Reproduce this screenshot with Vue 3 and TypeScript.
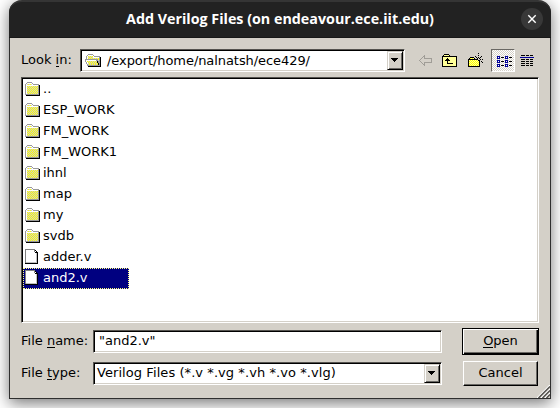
<script setup lang="ts">
import { h, ref, type FunctionalComponent } from 'vue'

type Bitmap = { rows: string[]; palette: Record<string, string> }

const folderPalette = { b: '#ffff00', c: '#cccccc', a: '#ffffff', '*': '#999999', d: '#000000' }

const bitmaps: Record<string, Bitmap> = {
  folder: {
    palette: folderPalette,
    rows: [
      '..*****........',
      '.*aaaaa*.......',
      '*acbcbca******.',
      '*aaaaaaaaaaaa*d',
      '*abcbcbcbcbcb*d',
      '*acbcbcbcbcbc*d',
      '*abcbcbcbcbcb*d',
      '*acbcbcbcbcbc*d',
      '*abcbcbcbcbcb*d',
      '*acbcbcbcbcbc*d',
      '*abcbcbcbcbcb*d',
      '*acbcbcbcbcbc*d',
      '**************d',
      '.dddddddddddddd',
    ],
  },
  openFolder: {
    palette: folderPalette,
    rows: [
      '...*****........',
      '..*aaaaa*.......',
      '.*abcbcba******.',
      '.*acbcbcaaaaaa*d',
      '.*abcbcbcbcbcb*d',
      '*************b*d',
      '*aaaaaaaaaa**c*d',
      '*abcbcbcbcbcd**d',
      '.*abcbcbcbcbd**d',
      '.*acbcbcbcbcbd*d',
      '..*cbcbcbcbcbd*d',
      '..*************d',
      '...ddddddddddddd',
    ],
  },
  file: {
    palette: { a: '#ffffff', g: '#808080', c: '#c0c0c0', d: '#000000' },
    rows: [
      'gggggggggg...',
      'gaaaaaaaagd..',
      'gaaaaaaaagad.',
      'gaaaaaaaaaddd',
      'gaaaaaaaaaacd',
      'gaaaaaaaaaacd',
      'gaaaaaaaaaacd',
      'gaaaaaaaaaacd',
      'gaaaaaaaaaacd',
      'gaaaaaaaaaacd',
      'gaaaaaaaaaacd',
      'gaaaaaaaaaacd',
      'gaaaaaaaaaacd',
      'gcccccccccccd',
      'ddddddddddddd',
    ],
  },
  back: {
    palette: { '#': '#a09d97' },
    rows: [
      '.....#.......',
      '....##.......',
      '...#.#.......',
      '..#..########',
      '.#..........#',
      '#...........#',
      '.#..........#',
      '..#..########',
      '...#.#.......',
      '....##.......',
      '.....#.......',
    ],
  },
  parent: {
    palette: { '*': '#000000', a: '#ffff99' },
    rows: [
      '..*****........',
      '.*aaaaa*.......',
      '***************',
      '*aaaaaaaaaaaaa*',
      '*aaaa*aaaaaaaa*',
      '*aaa***aaaaaaa*',
      '*aa*****aaaaaa*',
      '*aaaa*aaaaaaaa*',
      '*aaaa*aaaaaaaa*',
      '*aaaa******aaa*',
      '*aaaaaaaaaaaaa*',
      '*aaaaaaaaaaaaa*',
      '***************',
    ],
  },
  newFolder: {
    palette: { '*': '#000000', b: '#ffff00', a: '#ffff99' },
    rows: [
      '..........*....',
      '...............',
      '..........*....',
      '.......*.....*.',
      '..****..*.*.*..',
      '.*baba*..*.*...',
      '**********..*.*',
      '*ababababa**...',
      '*bababababa*.*.',
      '*ababababab*..*',
      '*bababababa*...',
      '*ababababab*...',
      '*bababababa*...',
      '************...',
    ],
  },
  list: {
    palette: { a: '#000099', b: '#ffffff', '*': '#000000' },
    rows: [
      'aaa.....aaa....',
      'aba.***.aba.***',
      'aaa.....aaa....',
      '...............',
      'aaa.....aaa....',
      'aba.***.aba.***',
      'aaa.....aaa....',
      '...............',
      'aaa.....aaa....',
      'aba.***.aba.***',
      'aaa.....aaa....',
    ],
  },
  details: {
    palette: { a: '#000099', '*': '#000000' },
    rows: [
      '.****.***.***.',
      '..............',
      'aaaaaaaaaaaaaa',
      '..............',
      '.****.***.***.',
      '..............',
      '.****.***.***.',
      '..............',
      '.****.***.***.',
      '..............',
      '.****.***.***.',
    ],
  },
  drop: {
    palette: { d: '#000000' },
    rows: ['ddddddd', '.ddddd.', '..ddd..', '...d...'],
  },
}

const PixelIcon: FunctionalComponent<{ name: string }> = (props) => {
  const { rows, palette } = bitmaps[props.name]
  const width = rows[0].length
  const paths = Object.entries(palette).map(([key, fill]) => {
    let d = ''
    rows.forEach((row, y) => {
      for (let x = 0; x < row.length; x++) if (row[x] === key) d += `M${x} ${y}h1v1h-1z`
    })
    return h('path', { d, fill })
  })
  return h(
    'svg',
    { width, height: rows.length, viewBox: `0 0 ${width} ${rows.length}`, 'shape-rendering': 'crispEdges' },
    paths,
  )
}
PixelIcon.props = ['name']

const entries = [
  { name: '..', icon: 'folder' },
  { name: 'ESP_WORK', icon: 'folder' },
  { name: 'FM_WORK', icon: 'folder' },
  { name: 'FM_WORK1', icon: 'folder' },
  { name: 'ihnl', icon: 'folder' },
  { name: 'map', icon: 'folder' },
  { name: 'my', icon: 'folder' },
  { name: 'svdb', icon: 'folder' },
  { name: 'adder.v', icon: 'file' },
  { name: 'and2.v', icon: 'file' },
]
const selected = ref('and2.v')
</script>

<template>
  <div class="desktop">
    <div class="window">
      <header class="titlebar">
        <span class="title">Add Verilog Files (on endeavour.ece.iit.edu)</span>
        <button class="close" aria-label="Close">
          <svg width="10" height="10" viewBox="0 0 10 10"><path d="M1.3 1.3l7.4 7.4M8.7 1.3L1.3 8.7" stroke="#fff" stroke-width="1.4" /></svg>
        </button>
      </header>

      <main class="body">
        <div class="lookrow">
          <label class="looklabel">Look <u>i</u>n:</label>
          <div class="field path">
            <PixelIcon name="openFolder" />
            <span class="pathtext">/export/home/nalnatsh/ece429/</span>
            <button class="drop"><PixelIcon name="drop" /></button>
          </div>
          <div class="tools">
            <button class="tool back"><PixelIcon name="back" /></button>
            <button class="tool up"><PixelIcon name="parent" /></button>
            <button class="tool new"><PixelIcon name="newFolder" /></button>
            <button class="tool list on"><PixelIcon name="list" /></button>
            <button class="tool details"><PixelIcon name="details" /></button>
          </div>
        </div>

        <ul class="files">
          <li
            v-for="e in entries"
            :key="e.name"
            :class="{ selected: e.name === selected }"
            @click="selected = e.name"
          >
            <span class="icon" :class="e.icon"><PixelIcon :name="e.icon" /></span>
            <span class="name">{{ e.name }}</span>
          </li>
        </ul>

        <div class="formrow">
          <label>File <u>n</u>ame:</label>
          <div class="field filename"><span>"and2.v"</span></div>
          <button class="push default"><span><u>O</u>pen</span></button>
        </div>
        <div class="formrow">
          <label>File <u>t</u>ype:</label>
          <div class="field filetype">
            <span class="typetext">Verilog Files (*.v *.vg *.vh *.vo *.vlg)</span>
            <button class="drop"><PixelIcon name="drop" /></button>
          </div>
          <button class="push"><span>Cancel</span></button>
        </div>
        <svg class="grip" width="13" height="13" viewBox="0 0 13 13">
          <path d="M0 13L13 0M4 13L13 4M8 13L13 8" stroke="#fff" stroke-width="1.2" />
          <path d="M1.5 13L13 1.5M5.5 13L13 5.5M9.5 13L13 9.5" stroke="#55534f" stroke-width="1.5" />
        </svg>
      </main>
    </div>
  </div>
</template>

<style>
body {
  background: #fff;
}
</style>

<style scoped>
* {
  box-sizing: border-box;
}
.desktop {
  height: 408px;
  padding-left: 9px;
  overflow: hidden;
}
.window {
  position: relative;
  width: 542px;
  height: 399px;
  border: 1px solid #2e2e2e;
  border-top: 0;
  border-radius: 13px 13px 0 0;
  background: #d4d0c8;
  box-shadow: 0 4px 16px rgba(0, 0, 0, 0.55);
  font: 13px/16px 'DejaVu Sans', sans-serif;
  color: #000;
}
button {
  padding: 0;
  margin: 0;
  border: 0;
  background: none;
  font: inherit;
  color: inherit;
}
svg {
  display: block;
  flex: none;
}
.titlebar {
  display: flex;
  align-items: center;
  justify-content: flex-end;
  height: 38px;
  margin: 0 -1px;
  padding-right: 8px;
  border-top: 2px solid #353535;
  border-bottom: 1px solid #181818;
  border-radius: 13px 13px 0 0;
  background: #222;
  color: #fff;
}
.title {
  flex: 1;
  padding: 0 0 1px 30px;
  text-align: center;
  white-space: nowrap;
  font: bold 14.3px/20px 'Open Sans', 'Noto Sans', sans-serif;
}
.close {
  display: flex;
  align-items: center;
  justify-content: center;
  width: 22px;
  height: 22px;
  margin-bottom: 1px;
  border-radius: 50%;
  background: #383838;
}
.body {
  padding: 11px 11px 0;
}
u {
  text-decoration: none;
  box-shadow: inset 0 -1px #000;
}
.lookrow {
  display: flex;
  align-items: center;
  height: 23px;
}
.looklabel {
  width: 59px;
  padding-bottom: 1px;
}
.field {
  display: flex;
  align-items: center;
  height: 23px;
  border: 1px solid;
  border-color: #55534f #fff #fff #55534f;
  box-shadow: inset 1px 1px #000, inset -1px -1px #d4d0c8;
  background: #fff;
  white-space: pre;
}
.path {
  width: 325px;
  padding: 0 1px 0 4px;
}
.pathtext {
  flex: 1;
  padding-left: 6px;
  letter-spacing: -0.07px;
}
.drop {
  display: flex;
  align-items: center;
  justify-content: center;
  width: 16px;
  height: 19px;
  padding: 0 1px 1px 0;
  border: 1px solid;
  border-color: #d4d0c8 #000 #000 #d4d0c8;
  box-shadow: inset 1px 1px #fff, inset -1px -1px #6a6864;
  background: #d4d0c8;
}
.tools {
  display: flex;
  margin-left: 8px;
}
.tool {
  display: flex;
  align-items: flex-start;
  height: 23px;
  padding: 6px 0 0 6px;
}
.back {
  width: 23px;
}
.up {
  width: 25px;
  padding-top: 5px;
}
.new {
  width: 30px;
  padding: 4px 0 0 7px;
}
.list.on {
  width: 24px;
  padding-left: 5px;
  border: 1px solid;
  border-color: #6a6864 #fff #fff #6a6864;
  background: repeating-conic-gradient(#fff 0 25%, #d4d0c8 0 50%) 0 0 / 2px 2px;
}
.details {
  padding-left: 5px;
}
.files {
  height: 246px;
  margin: 5px 0 0;
  padding: 1px;
  border: 1px solid;
  border-color: #55534f #fff #fff #55534f;
  box-shadow: inset 1px 1px #000, inset -1px -1px #d4d0c8;
  background: #fff;
  list-style: none;
}
.files li {
  display: flex;
  width: 106px;
  height: 21px;
  padding-left: 2px;
}
.icon {
  width: 18px;
  padding-top: 3px;
}
.icon.file {
  padding-top: 2px;
}
.name {
  padding-top: 2px;
}
.files li.selected {
  background: #000080;
  color: #fff;
  outline: 1px dotted #ffff80;
  outline-offset: -1px;
}
.formrow {
  display: flex;
  align-items: center;
  height: 27px;
  margin-top: 5px;
}
.formrow label {
  width: 72px;
  padding-bottom: 2px;
}
.filename {
  width: 349px;
  padding: 0 0 2px 5px;
}
.filetype {
  width: 349px;
  padding: 0 1px 0 3px;
}
.typetext {
  flex: 1;
  padding-bottom: 2px;
  letter-spacing: 0.07px;
}
.push {
  display: flex;
  align-items: center;
  justify-content: center;
  width: 75px;
  height: 25px;
  margin-left: 21px;
  padding-bottom: 2px;
  border: 1px solid;
  border-color: #fff #000 #000 #fff;
  box-shadow: inset -1px -1px #6a6864;
}
.push.default {
  width: 77px;
  height: 27px;
  margin-left: 20px;
  border: 1px solid #000;
  box-shadow: inset 1px 1px #fff, inset -1px -1px #000, inset -2px -2px #6a6864;
}
.grip {
  position: absolute;
  right: 0;
  bottom: 0;
}
</style>
